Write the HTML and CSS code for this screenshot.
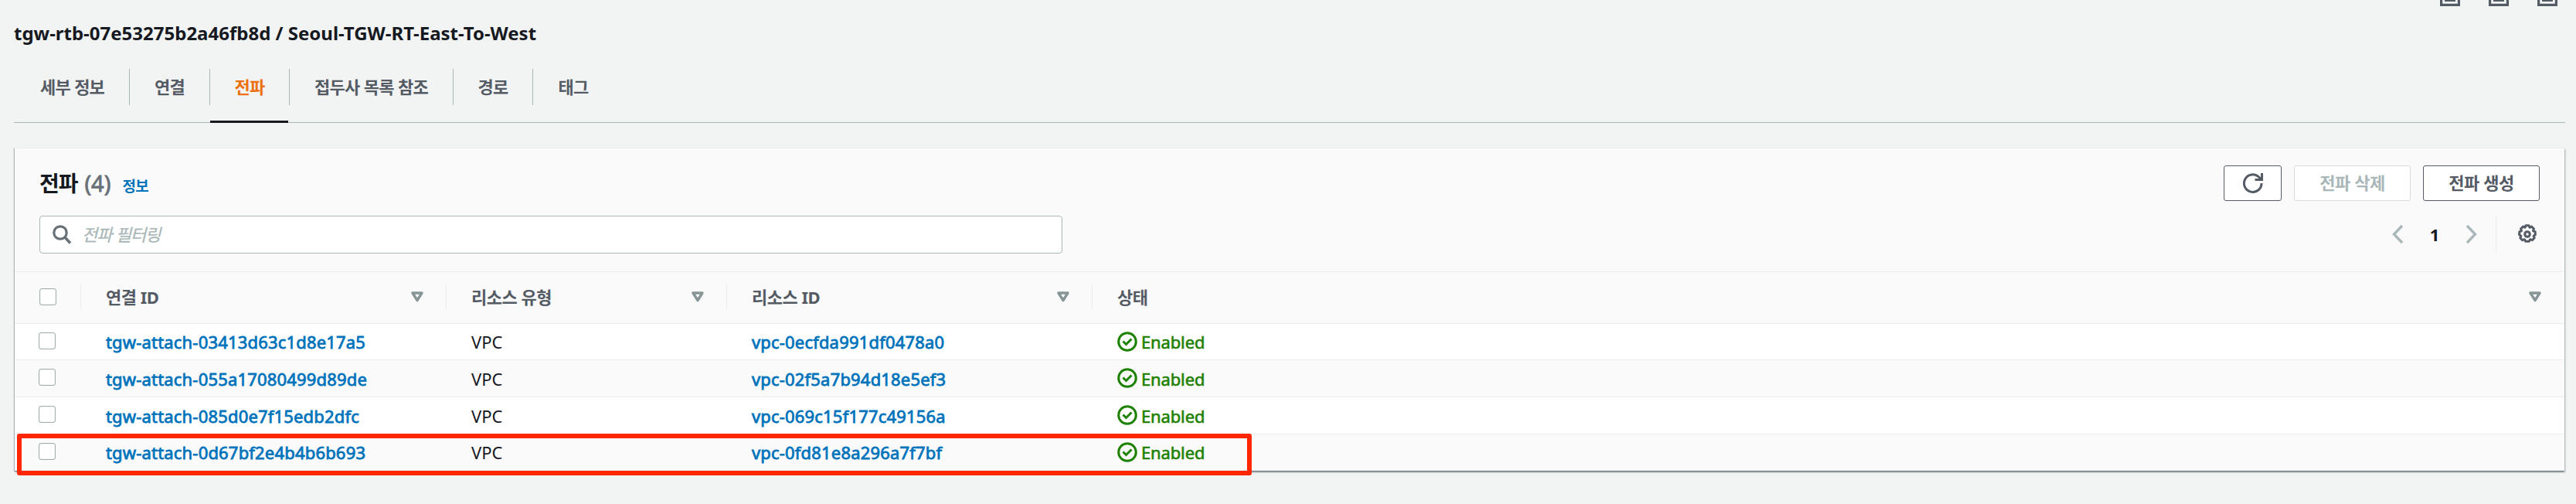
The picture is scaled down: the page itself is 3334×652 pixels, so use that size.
FILE: index.html
```
<!DOCTYPE html>
<html lang="ko">
<head>
<meta charset="utf-8">
<title>Transit Gateway</title>
<link rel="stylesheet" href="styles.css">
</head>
<body>
<svg class="defs" width="0" height="0">
  <symbol id="sort" viewBox="0 0 16 14"><path d="M2 2h12L8 11.5z" fill="none" stroke="#879596" stroke-width="3.400" stroke-linejoin="round"/></symbol>
  <symbol id="ok" viewBox="0 0 26 26"><circle cx="13" cy="13" r="11.3" fill="none" stroke="#1d8102" stroke-width="3"/><path d="M7.500 12.500l4 4 7-7" fill="none" stroke="#1d8102" stroke-width="3"/></symbol>
  <symbol id="pane" viewBox="0 0 26 26"><path d="M1.500 1.500h23v23h-23z" fill="none" stroke="#545b64" stroke-width="3.400"/><path d="M6 6h14v14H6z" fill="#545b64"/></symbol>
</svg>
<div class="page">
  <div class="panes">
    <svg><use href="#pane"/></svg><svg><use href="#pane"/></svg><svg><use href="#pane"/></svg>
  </div>
  <h1 class="title"><span>tgw-rtb-07e53275b2a46fb8d / Seoul-TGW-RT-East-To-West</span></h1>
  <nav class="tabs">
    <a class="tab t1"><span>세부 정보</span></a>
    <a class="tab t2"><span>연결</span></a>
    <a class="tab t3 active"><span>전파</span></a>
    <a class="tab t4"><span>접두사 목록 참조</span></a>
    <a class="tab t5"><span>경로</span></a>
    <a class="tab t6"><span>태그</span></a>
  </nav>
  <section class="panel">
    <header class="panel-head">
      <h2><span>전파</span> <span class="count">(4)</span></h2><a class="info">정보</a>
      <div class="actions">
        <button class="btn icon"><svg width="26" height="26" viewBox="0 0 26 26"><path d="M24 13A11.300 11.300 0 1 1 20.500 5L23 7.500M24.500 0v8.500H15.500" fill="none" stroke="#545b64" stroke-width="3"/></svg></button>
        <button class="btn disabled">전파 삭제</button>
        <button class="btn">전파 생성</button>
      </div>
    </header>
    <div class="tools">
      <div class="search">
        <svg width="25" height="25" viewBox="0 0 25 25"><circle cx="10" cy="10" r="8.200" fill="none" stroke="#687078" stroke-width="3.200"/><path d="M15.500 15.500l7.500 8" stroke="#687078" stroke-width="3.600"/></svg>
        <span class="ph">전파 필터링</span>
      </div>
      <div class="pager">
        <svg width="15" height="26" viewBox="0 0 15 26"><path d="M13 2L2.500 13 13 24" fill="none" stroke="#aab7b8" stroke-width="3.300"/></svg>
        <b>1</b>
        <svg width="15" height="26" viewBox="0 0 15 26"><path d="M2 2l10.500 11L2 24" fill="none" stroke="#aab7b8" stroke-width="3.300"/></svg>
      </div>
      <div class="gear"><svg width="26" height="26" viewBox="0 0 26 26"><path d="M11 1.700h4l1 2.600 2.500-1.200 3 2.900-1 2.600 2.700 1.200.2 3.900-2.300 1.500 1.100 2.600-2.800 2.900-2.700-1-1.400 2.600h-4.600l-1.400-2.600-2.700 1-2.800-2.900 1.100-2.600-2.300-1.500.2-3.900 2.700-1.200-1-2.600 3-2.900L10 4.300z" fill="none" stroke="#545b64" stroke-width="3" stroke-linejoin="round"/><circle cx="13" cy="13" r="3.300" fill="none" stroke="#545b64" stroke-width="3"/></svg></div>
    </div>
    <div class="row head">
      <div class="cell sel"><i class="box"></i></div>
      <div class="cell"><span class="latin">연결 ID</span><svg><use href="#sort"/></svg></div>
      <div class="cell"><span>리소스 유형</span><svg><use href="#sort"/></svg></div>
      <div class="cell"><span class="latin">리소스 ID</span><svg><use href="#sort"/></svg></div>
      <div class="cell"><span>상태</span><svg><use href="#sort"/></svg></div>
    </div>
    <div class="row first"><div class="cell sel"><i class="box"></i></div><a class="cell link">tgw-attach-03413d63c1d8e17a5</a><div class="cell">VPC</div><a class="cell link vpc">vpc-0ecfda991df0478a0</a><div class="cell status"><svg><use href="#ok"/></svg><span>Enabled</span></div></div>
    <div class="row alt"><div class="cell sel"><i class="box"></i></div><a class="cell link">tgw-attach-055a17080499d89de</a><div class="cell">VPC</div><a class="cell link vpc">vpc-02f5a7b94d18e5ef3</a><div class="cell status"><svg><use href="#ok"/></svg><span>Enabled</span></div></div>
    <div class="row"><div class="cell sel"><i class="box"></i></div><a class="cell link">tgw-attach-085d0e7f15edb2dfc</a><div class="cell">VPC</div><a class="cell link vpc">vpc-069c15f177c49156a</a><div class="cell status"><svg><use href="#ok"/></svg><span>Enabled</span></div></div>
    <div class="row alt last"><div class="cell sel"><i class="box"></i></div><a class="cell link">tgw-attach-0d67bf2e4b4b6b693</a><div class="cell">VPC</div><a class="cell link vpc">vpc-0fd81e8a296a7f7bf</a><div class="cell status"><svg><use href="#ok"/></svg><span>Enabled</span></div><div class="marker"></div></div>
  </section>
</div>
</body>
</html>
```
FILE: styles.css
```
* { box-sizing: border-box; }
body { margin: 0; background: #f2f3f3; color: #16191f; font: 22px/30px "Noto Sans", "Noto Sans CJK KR", sans-serif; overflow: hidden; }
.defs { display: block; width: 0; height: 0; }
.page { height: 652px; padding: 0 14px 0 18px; overflow: hidden; }
.panes { height: 8px; display: flex; justify-content: flex-end; align-items: flex-end; gap: 37px; padding-right: 10px; overflow: hidden; }
.panes svg { width: 26px; height: 26px; flex: none; }
.title { margin: 19px 0 0; height: 32px; font-size: 24px; line-height: 32px; font-weight: 700; white-space: nowrap; }
.tabs { display: flex; height: 100px; padding-top: 30px; border-bottom: 1px solid #aab7b8; color: #545b64; font-family: "Noto Sans CJK KR", sans-serif; font-weight: 700; font-size: 22px; letter-spacing: -0.8px; }
.tab { position: relative; height: 47px; display: flex; align-items: center; justify-content: center; padding-bottom: 3px; white-space: nowrap; border-right: 1px solid #aab7b8; }
.t1 { width: 150px; padding-left: 2px; } .t2 { width: 104px; } .t3 { width: 103px; } .t4 { width: 212px; } .t5 { width: 103px; } .t6 { width: 104px; border-right: 0; }
.active { color: #ec7211; }
.active::after { content: ""; position: absolute; left: 0; right: 1px; top: 67px; height: 3px; background: #16191f; }
.panel { width: 3300px; height: 418px; margin: 32px 0 0 1px; background: #fafafa; border-top: 1px solid #eaeded; box-shadow: 0 2px 2px -1px #6b7778, 1px 2px 2px 0 rgba(0,28,36,.3), -1px 1px 1px 0 rgba(0,28,36,.25); }
.panel-head { display: flex; height: 68px; padding: 22px 32px 0 32px; font-family: "Noto Sans CJK KR", sans-serif; }
h2 { margin: 4px 0 0; font-size: 28px; line-height: 36px; letter-spacing: -1px; font-weight: 700; white-space: nowrap; }
.count { color: #687078; font-weight: 400; font-family: "Noto Sans", sans-serif; font-size: 29px; letter-spacing: 0; margin-left: 2px; -webkit-text-stroke: .8px #687078; }
.info { margin: 11px 0 0 15px; color: #0073bb; font-size: 19px; line-height: 30px; font-weight: 700; letter-spacing: -.5px; }
.actions { margin-left: auto; display: flex; gap: 16px; height: 46px; }
.btn { width: 151px; height: 46px; padding: 0 0 4px; border: 1px solid #545b64; border-radius: 3px; background: #fff; color: #545b64; font: 700 22px/30px "Noto Sans CJK KR", sans-serif; letter-spacing: -.5px; }
.icon { width: 75px; padding: 0; display: flex; align-items: center; justify-content: center; }
.disabled { border-color: #d5dbdb; color: #aab7b8; }
.tools { display: flex; height: 92px; padding: 19px 32px 0; border-bottom: 1px solid #eaeded; }
.search { display: flex; align-items: center; width: 1324px; height: 49px; border: 1px solid #aab7b8; border-radius: 4px; background: #fff; padding-left: 16px; gap: 13px; }
.ph { padding-bottom: 3px; color: #aab7b8; font-family: "Noto Sans CJK KR", sans-serif; font-style: italic; font-size: 22px; letter-spacing: -1px; -webkit-text-stroke: .3px #aab7b8; }
.pager { margin-left: auto; display: flex; align-items: center; justify-content: space-between; width: 135px; height: 48px; padding-right: 24px; border-right: 1px solid #eaeded; }
.gear { display: flex; align-items: center; height: 48px; padding: 0 3px 0 27px; }
.row { position: relative; display: grid; grid-template-columns: 86px 473px 363px 473px 1fr; height: 48px; background: #fff; border-bottom: 1px solid #eaeded; }
.first, .last { height: 47px; }
.alt { background: #fafafa; }
.head { height: 67px; background: #fafafa; color: #545b64; font-weight: 700; font-family: "Noto Sans", "Noto Sans CJK KR", sans-serif; letter-spacing: -.5px; }
.cell { display: flex; align-items: center; padding-left: 32px; white-space: nowrap; }
.head .cell { height: 33px; margin-top: 16px; border-right: 1px solid #eaeded; justify-content: space-between; padding: 0 29px 1px 32px; }
.head .cell:last-child { border: 0; padding-right: 30px; }
.head .latin { letter-spacing: -.5px; }
.head svg { width: 16px; height: 14px; }
.row .sel { padding-left: 31px; padding-bottom: 3px; }
.head .sel { padding: 0 0 1px 32px; }
.box { width: 22px; height: 22px; flex: none; border: 1px solid #a0aeaf; border-radius: 3px; background: #fff; box-shadow: inset 0 0 1px #aab7b8; }
.link { color: #0073bb; -webkit-text-stroke: .8px #0073bb; letter-spacing: .18px; }
.status { color: #1d8102; gap: 5px; }
.status span { letter-spacing: -.15px; -webkit-text-stroke: .6px #1d8102; }
.status svg { width: 26px; height: 26px; margin-bottom: 1px; }
.marker { position: absolute; left: 3px; top: -1px; width: 1598px; height: 54px; border: 6px solid #ff2600; border-radius: 3px; }
```
